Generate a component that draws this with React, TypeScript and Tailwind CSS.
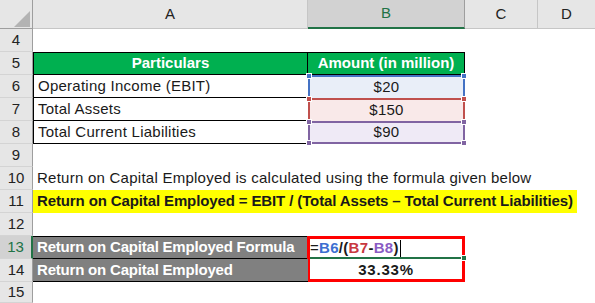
import React from "react";

const FONT = { fontFamily: '"Liberation Sans", Arial, sans-serif' };

// Sheet grid: row header, A, B, C, D / header row, rows 4..14, partial row 15
const SHEET =
  "grid grid-cols-[33px_275px_157px_73px_57px] grid-rows-[29px_repeat(11,23px)_21px]";

function RowHead({ n, active }: { n: number; active?: boolean }) {
  return (
    <div
      className={`flex items-center justify-center border-b border-[#d4d4d4] text-[15px] ${
        active
          ? "bg-[#d2d2d2] text-[#217346] border-r-2 border-r-[#217346]"
          : "bg-[#e6e6e6] text-[#222] border-r border-r-[#9e9e9e]"
      }`}
    >
      {n}
    </div>
  );
}

function ColHead({ label, active, last }: { label: string; active?: boolean; last?: boolean }) {
  return (
    <div
      className={`flex items-center justify-center text-[15px] ${
        active
          ? "bg-[#d2d2d2] text-[#217346] border-r border-r-[#9e9e9e] border-b-2 border-b-[#217346]"
          : `bg-[#e6e6e6] text-[#222] border-b border-[#c6c6c6] ${last ? "" : "border-r"}`
      }`}
    >
      {label}
    </div>
  );
}

// small square handles at corners of a referenced range
function Handles({ top, bottom }: { top?: string; bottom?: string }) {
  return (
    <>
      {top && (
        <>
          <span className="absolute -left-[4px] -top-[4px] w-[6px] h-[6px] border border-white" style={{ backgroundColor: top }} />
          <span className="absolute -right-[4px] -top-[4px] w-[6px] h-[6px] border border-white" style={{ backgroundColor: top }} />
        </>
      )}
      {bottom && (
        <>
          <span className="absolute -left-[4px] -bottom-[4px] w-[6px] h-[6px] border border-white" style={{ backgroundColor: bottom }} />
          <span className="absolute -right-[4px] -bottom-[4px] w-[6px] h-[6px] border border-white" style={{ backgroundColor: bottom }} />
        </>
      )}
    </>
  );
}

const cellA = "flex items-center whitespace-nowrap px-[4px] text-[15px]";
const cellB = "relative flex items-center justify-center whitespace-nowrap text-[15px]";

export default function App() {
  return (
    <div className="w-[595px] h-[303px] overflow-hidden bg-white text-[#1a1a1a]" style={FONT}>
      <div className={SHEET}>
        {/* header row */}
        <div className="relative bg-[#e6e6e6] border-r border-b border-[#9e9e9e]">
          <svg className="absolute left-[14px] top-[11px]" width="16" height="16" viewBox="0 0 16 16">
            <polygon points="16,0 16,16 0,16" fill="#b3b3b3" />
          </svg>
        </div>
        <ColHead label="A" />
        <ColHead label="B" active />
        <ColHead label="C" />
        <ColHead label="D" last />

        {/* 4 */}
        <RowHead n={4} />
        <div />
        <div />
        <div />
        <div />

        {/* 5 */}
        <RowHead n={5} />
        <div className={`${cellA} justify-center bg-[#00b050] text-white font-bold border border-black`}>
          Particulars
        </div>
        <div className={`${cellB} bg-[#00b050] text-white font-bold border border-l-0 border-black`}>
          Amount (in million)
        </div>
        <div />
        <div />

        {/* 6 */}
        <RowHead n={6} />
        <div className={`${cellA} tracking-[0.25px] border-l border-b border-black`}>Operating Income (EBIT)</div>
        <div className={`${cellB} tracking-[0.25px] bg-[#e9eef8] border-x-2 border-t-2 border-[#4472c4]`}>
          $20
          <Handles top="#4472c4" />
        </div>
        <div />
        <div />

        {/* 7 */}
        <RowHead n={7} />
        <div className={`${cellA} tracking-[0.25px] border-l border-b border-black`}>Total Assets</div>
        <div className={`${cellB} tracking-[0.25px] bg-[#f9e9e9] border-x-2 border-t-2 border-[#c0504d]`}>
          $150
          <Handles top="#c0504d" />
        </div>
        <div />
        <div />

        {/* 8 */}
        <RowHead n={8} />
        <div className={`${cellA} tracking-[0.25px] border-l border-b border-black`}>Total Current Liabilities</div>
        <div className={`${cellB} tracking-[0.25px] bg-[#efeaf6] border-2 border-[#8064a2]`}>
          $90
          <Handles top="#8064a2" bottom="#8064a2" />
        </div>
        <div />
        <div />

        {/* 9 */}
        <RowHead n={9} />
        <div />
        <div />
        <div />
        <div />

        {/* 10 */}
        <RowHead n={10} />
        <div className={`${cellA} tracking-[0.25px]`}>
          Return on Capital Employed is calculated using the formula given below
        </div>
        <div />
        <div />
        <div />

        {/* 11 */}
        <RowHead n={11} />
        <div className="col-span-4 flex">
          <div className="flex items-center w-[544px] bg-[#ffff00] px-[4px] whitespace-nowrap text-[15px] font-bold tracking-[-0.12px]">
            Return on Capital Employed = EBIT / (Total Assets – Total Current Liabilities)
          </div>
        </div>

        {/* 12 */}
        <RowHead n={12} />
        <div />
        <div />
        <div />
        <div />

        {/* 13 */}
        <RowHead n={13} active />
        <div className={`${cellA} bg-[#808080] text-white font-bold tracking-[-0.2px] border-t border-b border-black`}>
          Return on Capital Employed Formula
        </div>
        <div className="row-span-2 -ml-px flex flex-col border-[3px] border-[#ff0000]">
          <div className="relative h-[20px] flex items-center border-b-2 border-[#217346] text-[15px] font-bold tracking-[0.3px] whitespace-nowrap">
            <span className="font-normal">=</span>
            <span className="text-[#3c6fd1]">B6</span>
            <span>/(</span>
            <span className="text-[#c8383f]">B7</span>
            <span>-</span>
            <span className="text-[#8a5cc4]">B8</span>
            <span>)</span>
            <span className="ml-[1px] w-px h-[17px] bg-black" />
            <span className="absolute -right-[5px] -bottom-[4px] w-[6px] h-[6px] bg-[#217346] border border-white" />
          </div>
          <div className="flex-1 flex items-center justify-center text-[15px] font-bold tracking-[0.8px]">33.33%</div>
        </div>
        <div />
        <div />

        {/* 14 */}
        <RowHead n={14} />
        <div className={`${cellA} bg-[#808080] text-white font-bold tracking-[-0.2px] border-b border-black`}>
          Return on Capital Employed
        </div>
        <div />
        <div />

        {/* 15 */}
        <RowHead n={15} />
        <div />
        <div />
        <div />
        <div />
      </div>
    </div>
  );
}
